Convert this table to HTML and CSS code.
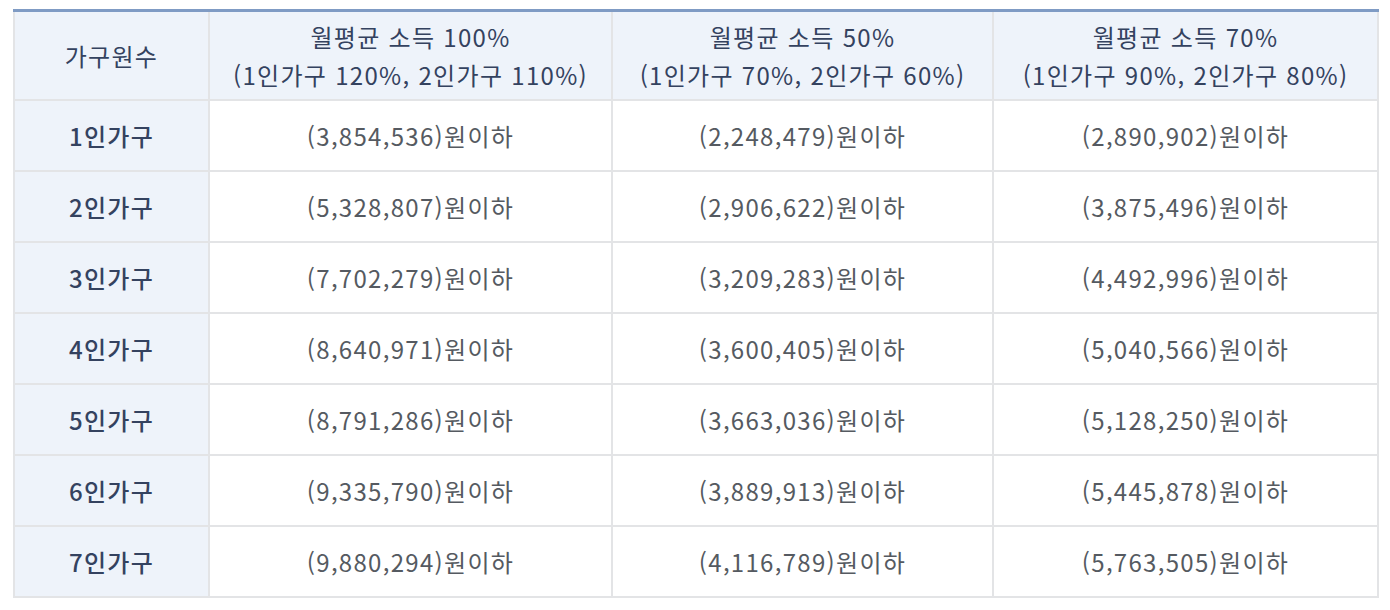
FILE: index.html
```html
<!DOCTYPE html>
<html lang="ko">
<head>
<meta charset="utf-8">
<link rel="stylesheet" href="styles.css">
</head>
<body>
<table class="income">
  <colgroup>
    <col class="c1"><col class="c2"><col class="c3"><col class="c4">
  </colgroup>
  <thead>
    <tr>
      <th>가구원수</th>
      <th>월평균 소득 100%<br>(1인가구 120%, 2인가구 110%)</th>
      <th>월평균 소득 50%<br>(1인가구 70%, 2인가구 60%)</th>
      <th>월평균 소득 70%<br>(1인가구 90%, 2인가구 80%)</th>
    </tr>
  </thead>
  <tbody>
    <tr><th>1인가구</th><td>(3,854,536)원이하</td><td>(2,248,479)원이하</td><td>(2,890,902)원이하</td></tr>
    <tr><th>2인가구</th><td>(5,328,807)원이하</td><td>(2,906,622)원이하</td><td>(3,875,496)원이하</td></tr>
    <tr><th>3인가구</th><td>(7,702,279)원이하</td><td>(3,209,283)원이하</td><td>(4,492,996)원이하</td></tr>
    <tr><th>4인가구</th><td>(8,640,971)원이하</td><td>(3,600,405)원이하</td><td>(5,040,566)원이하</td></tr>
    <tr><th>5인가구</th><td>(8,791,286)원이하</td><td>(3,663,036)원이하</td><td>(5,128,250)원이하</td></tr>
    <tr><th>6인가구</th><td>(9,335,790)원이하</td><td>(3,889,913)원이하</td><td>(5,445,878)원이하</td></tr>
    <tr><th>7인가구</th><td>(9,880,294)원이하</td><td>(4,116,789)원이하</td><td>(5,763,505)원이하</td></tr>
  </tbody>
</table>
</body>
</html>
```

FILE: styles.css
```css
html, body {
  margin: 0;
  padding: 0;
  background: #ffffff;
}
body {
  padding: 9px 13px 0 13px;
  font-family: "Noto Sans CJK KR", "Noto Sans", sans-serif;
}
.income {
  width: 1364px;
  border-collapse: collapse;
  table-layout: fixed;
  border-top: 3px solid #7f9bc4;
}
.income col.c1 { width: 195px; }
.income col.c2 { width: 403px; }
.income col.c3 { width: 381px; }
.income col.c4 { width: 385px; }
.income th,
.income td {
  border: 2px solid #e3e4e6;
  text-align: center;
  vertical-align: middle;
  padding: 0;
  font-size: 24px;
  letter-spacing: 1.3px;
}
.income thead th {
  background: #eef3fa;
  color: #34425f;
  font-weight: 400;
  line-height: 38px;
  height: 87px;
}
.income tbody th {
  background: #eef3fa;
  color: #34425f;
  font-weight: 500;
  height: 69px;
}
.income tbody td {
  background: #ffffff;
  color: #555a61;
  font-weight: 400;
  height: 69px;
}
```
